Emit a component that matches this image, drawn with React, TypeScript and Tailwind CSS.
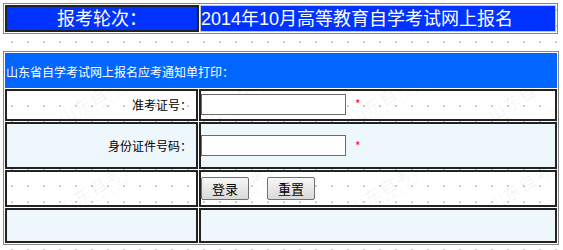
import React from "react";

const marks: { x: number; y: number }[] = [];
[100, 190].forEach((y) => {
  [100, 245, 390, 535].forEach((x) => marks.push({ x, y }));
});

function Watermark({ x, y }: { x: number; y: number }) {
  return (
    <div
      className="absolute flex flex-col items-center leading-none -rotate-[32deg] text-[rgba(0,0,0,0.06)] font-['Noto_Sans_CJK_SC',sans-serif]"
      style={{ left: x - 45, top: y - 14 }}
    >
      <span className="text-[17px] tracking-[1px]">山东自考网</span>
      <span className="text-[8px] font-['Liberation_Sans',sans-serif] tracking-[1px] mt-[1px]">SDZKW.COM</span>
    </div>
  );
}

export default function App() {
  const cjk = "font-['Noto_Sans_CJK_SC',sans-serif]";
  return (
    <div className="relative w-[563px] h-[250px] overflow-hidden bg-white bg-[radial-gradient(circle,#cccccc_0.9px,transparent_1.3px)] bg-[length:16px_16px] bg-[position:4px_2px]">
      <div className="absolute inset-0 pointer-events-none">
        {marks.map((m, i) => (
          <Watermark key={i} x={m.x} y={m.y} />
        ))}
      </div>

      <div className="relative pt-[3px] pl-[3px]">
        {/* top table */}
        <div className="w-[555px] h-[31px] border border-[#888888] p-px flex gap-px">
          <div className="w-[194px] border-2 border-[#222222] bg-[#0033ff] flex items-center justify-center text-white text-[18px] leading-none font-['Liberation_Sans','Noto_Sans_CJK_SC',sans-serif]">
            报考轮次：
          </div>
          <div className="flex-1 border border-[#c4c4c4] bg-[#0033ff] flex items-center text-white text-[18px] leading-none font-['Liberation_Sans','Noto_Sans_CJK_SC',sans-serif]">
            2014年10月高等教育自学考试网上报名
          </div>
        </div>

        {/* second table */}
        <div className={`mt-[17px] w-[556px] border border-[#888888] p-px flex flex-col gap-px ${cjk}`}>
          <div className="h-[35px] bg-[#0066ff] flex items-center pl-[1px] pt-[2px] text-white text-[12px] leading-none">
            山东省自学考试网上报名应考通知单打印：
          </div>

          <div className="flex gap-px h-[32px]">
            <div className="w-[193px] border-2 border-[#222222] flex items-center justify-end pr-[4px] text-[12px] text-black">
              准考证号：
            </div>
            <div className="flex-1 border-2 border-[#222222] flex items-center">
              <div className="w-[145px] h-[21px] border border-[#6b6b6b] bg-white -mt-[2px]" />
              <span className="ml-[9px] text-[12px] text-[#ff0033] -mt-[2px]">*</span>
            </div>
          </div>

          <div className="flex gap-px h-[47px]">
            <div className="w-[193px] border-2 border-[#222222] bg-[#eef7fb] flex items-center justify-end pr-[4px] text-[12px] text-black">
              身份证件号码：
            </div>
            <div className="flex-1 border-2 border-[#222222] bg-[#eef7fb] flex items-center">
              <div className="w-[145px] h-[21px] border border-[#6b6b6b] bg-white" />
              <span className="ml-[9px] text-[12px] text-[#ff0033]">*</span>
            </div>
          </div>

          <div className="flex gap-px h-[37px]">
            <div className="w-[193px] border-2 border-[#222222]" />
            <div className="flex-1 border-2 border-[#222222] flex items-center gap-[18px]">
              <button className="w-[48px] h-[23px] border border-[#707070] rounded-[2px] bg-gradient-to-b from-[#f7f7f7] to-[#d9d9d9] text-[13px] leading-none text-black">
                登录
              </button>
              <button className="w-[48px] h-[23px] border border-[#707070] rounded-[2px] bg-gradient-to-b from-[#f7f7f7] to-[#d9d9d9] text-[13px] leading-none text-black">
                重置
              </button>
            </div>
          </div>

          <div className="flex gap-px h-[35px]">
            <div className="w-[193px] border-2 border-[#222222] bg-[#eef7fb]" />
            <div className="flex-1 border-2 border-[#222222] bg-[#eef7fb]" />
          </div>
        </div>
      </div>
    </div>
  );
}
